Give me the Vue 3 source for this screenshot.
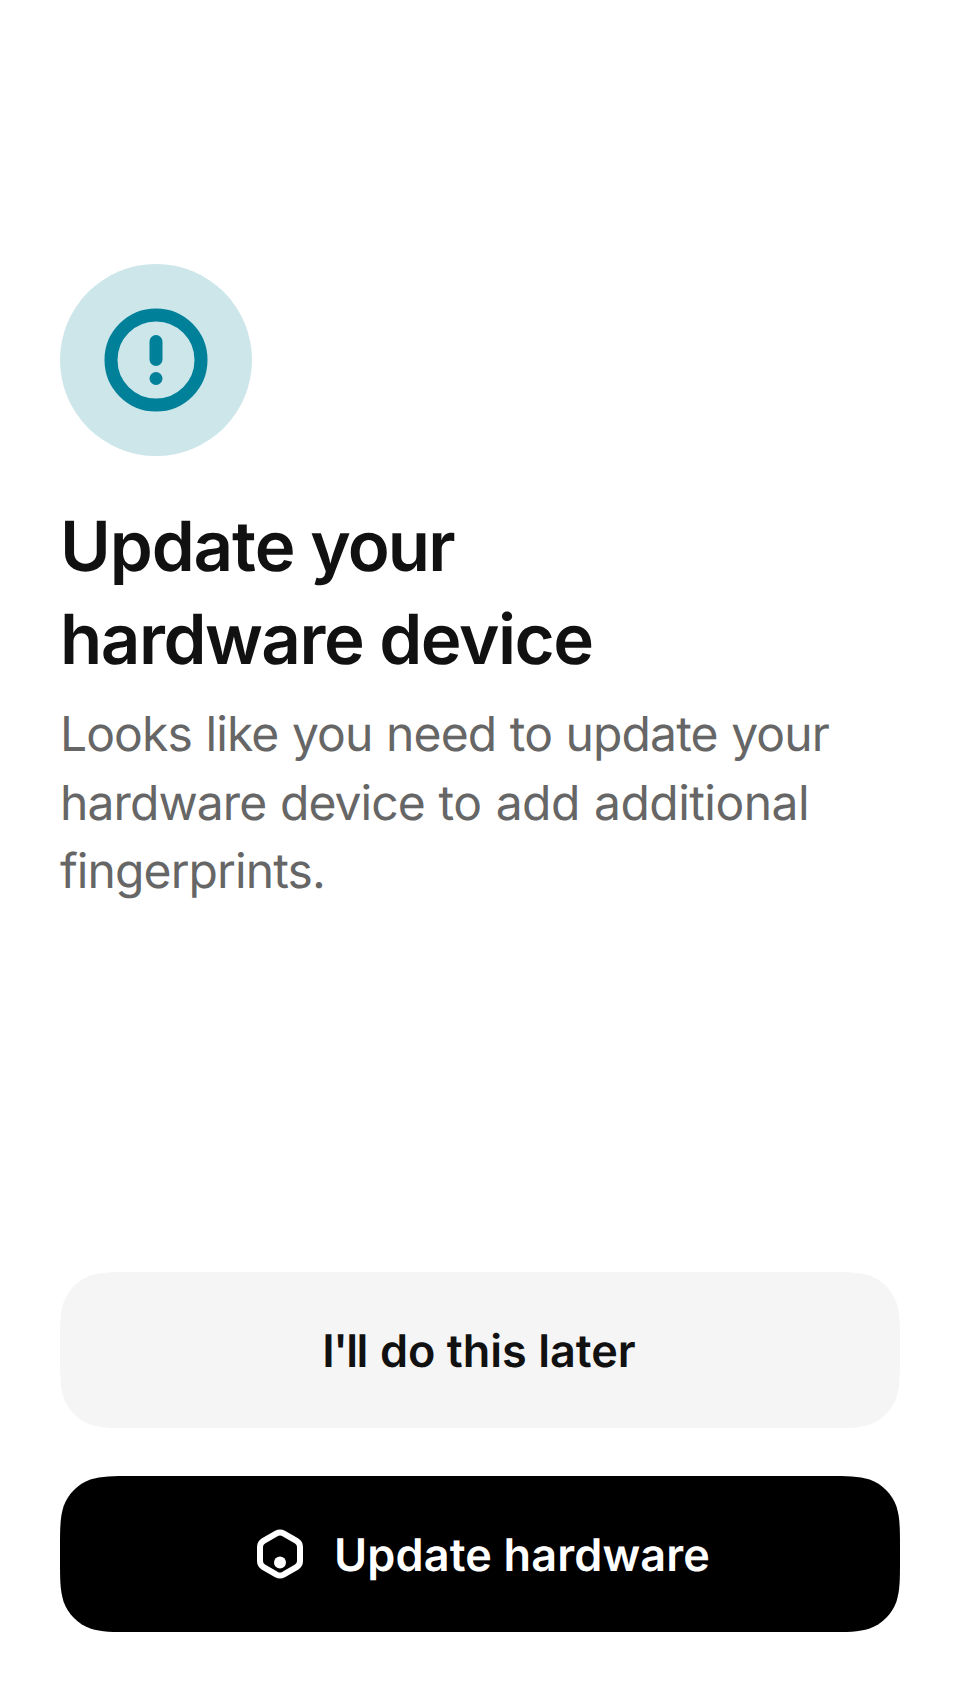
<script setup>
// Continuous-curvature corner outline for the 840×156 buttons.
const W = 840
const H = 156
const R = 48
function smoothRect(w, h, r) {
  const a = 1.52866 * r, b = 1.08849 * r, c = 0.86841 * r
  const d = 0.63149 * r, e = 0.07491 * r, f = 0.37282 * r, g = 0.16906 * r
  return [
    `M${a} 0H${w - a}`,
    `C${w - b} 0 ${w - c} 0 ${w - d} ${e}`,
    `C${w - f} ${g} ${w - g} ${f} ${w - e} ${d}`,
    `C${w} ${c} ${w} ${b} ${w} ${a}V${h - a}`,
    `C${w} ${h - b} ${w} ${h - c} ${w - e} ${h - d}`,
    `C${w - g} ${h - f} ${w - f} ${h - g} ${w - d} ${h - e}`,
    `C${w - c} ${h} ${w - b} ${h} ${w - a} ${h}H${a}`,
    `C${b} ${h} ${c} ${h} ${d} ${h - e}`,
    `C${f} ${h - g} ${g} ${h - f} ${e} ${h - d}`,
    `C0 ${h - c} 0 ${h - b} 0 ${h - a}V${a}`,
    `C0 ${b} 0 ${c} ${e} ${d}`,
    `C${g} ${f} ${f} ${g} ${d} ${e}`,
    `C${c} 0 ${b} 0 ${a} 0Z`,
  ].join('')
}
const outline = smoothRect(W, H, R)
</script>

<template>
  <main class="screen">
    <section class="intro">
      <div class="badge">
        <svg width="104" height="104" viewBox="0 0 104 104" fill="none">
          <circle cx="52" cy="52" r="45" stroke="#008099" stroke-width="13" />
          <path d="M52 33.500V51.500" stroke="#008099" stroke-width="13" stroke-linecap="round" />
          <circle cx="52" cy="70.500" r="6.500" fill="#008099" />
        </svg>
      </div>
      <h1><span class="loose">Update</span> <span class="snug">your</span><br />hardware device</h1>
      <p>Looks like you need to update your<br />hardware device <span class="wide">to add additional</span><br />fingerprints.</p>
    </section>
    <footer class="actions">
      <button class="btn secondary">
        <svg class="shape" viewBox="0 0 840 156"><path :d="outline" fill="#f5f5f5" /></svg>
        <span class="label"><span class="tight">I'll</span> do this later</span>
      </button>
      <button class="btn primary">
        <svg class="shape" viewBox="0 0 840 156"><path :d="outline" fill="#000" /></svg>
        <svg class="hex" width="46" height="50" viewBox="0 0 46 50" fill="none">
          <path d="M19.500 4.400Q23 2.600 26.500 4.400L39.500 11.900Q43 14 43 18V32Q43 36 39.500 38.100L26.500 45.600Q23 47.400 19.500 45.600L6.500 38.100Q3 36 3 32V18Q3 14 6.500 11.900Z" stroke="#fff" stroke-width="6" />
          <circle cx="23" cy="33.500" r="6" fill="#fff" />
        </svg>
        <span class="label">Update hardware</span>
      </button>
    </footer>
  </main>
</template>

<style>
body { margin: 0; background: #fff; }
</style>

<style scoped>
.screen {
  box-sizing: border-box;
  width: 960px;
  height: 1704px;
  padding: 264px 60px 72px;
  display: flex;
  flex-direction: column;
  justify-content: space-between;
  background: #fff;
  font-family: Inter, sans-serif;
  text-rendering: geometricPrecision;
}
.badge {
  width: 192px;
  height: 192px;
  border-radius: 50%;
  background: #cce6ea;
  display: flex;
  align-items: center;
  justify-content: center;
}
h1 {
  margin: 44px 0 0;
  font-size: 69px;
  line-height: 93px;
  font-weight: 600;
  letter-spacing: -1.45px;
  color: #111;
}
.loose { letter-spacing: -1.1px; }
.snug { letter-spacing: -1.9px; }
p {
  margin: 14px 0 0;
  font-size: 48px;
  line-height: 68.5px;
  letter-spacing: -0.9px;
  word-spacing: 1px;
  color: #666;
}
.wide { letter-spacing: -0.55px; word-spacing: 1.3px; }
.actions { display: flex; flex-direction: column; gap: 48px; }
.btn {
  position: relative;
  height: 156px;
  border: 0;
  padding: 2px 0 0;
  background: none;
  display: flex;
  align-items: center;
  justify-content: center;
  font: 600 45px/60px Inter, sans-serif;
  text-rendering: geometricPrecision;
}
.shape { position: absolute; inset: 0; width: 840px; height: 156px; }
.label { position: relative; }
.secondary { color: #111; padding-right: 2px; }
.tight { letter-spacing: -1.6px; margin-right: 2px; }
.primary { color: #fff; letter-spacing: 0.15px; }
.hex { position: relative; top: -1px; margin-right: 31px; margin-left: 7px; }
</style>
